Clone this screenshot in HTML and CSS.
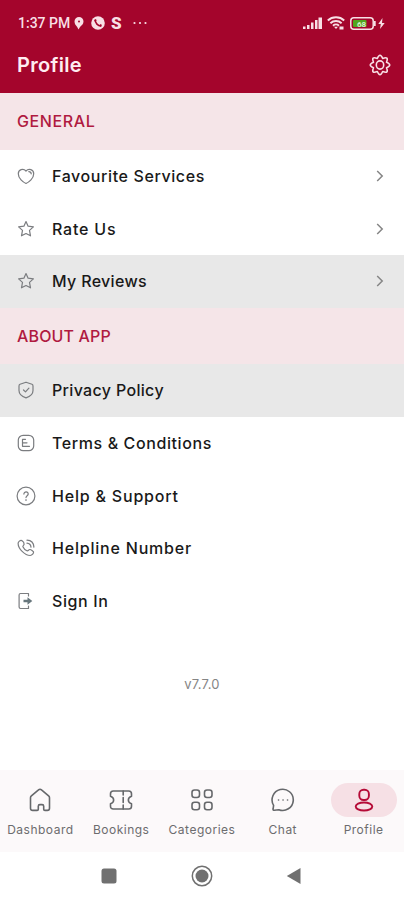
FILE: index.html
```html
<!DOCTYPE html>
<html lang="en">
<head>
<meta charset="utf-8">
<title>Profile</title>
<link rel="stylesheet" href="styles.css">
</head>
<body>
<header class="top">
  <div class="status">
    <span class="time">1:37 PM</span>
    <svg class="pin" width="10" height="13" viewBox="0 0 10 13"><path fill="currentColor" d="M5 0a4.500 4.500 0 0 0-4.500 4.500c0 2.500 1.500 4 2.700 5.500L4.500 12.500 6 10c1.500-1.500 3.500-3 3.500-5.500A4.500 4.500 0 0 0 5 0z"/><circle cx="5" cy="4.500" r="1" fill="#a4052c"/></svg>
    <svg class="call" width="14" height="14" viewBox="0 0 14 14"><circle cx="7" cy="7" r="6.800" fill="currentColor"/><path d="M4.200 4.100c0 3 2.700 5.700 5.700 5.800" fill="none" stroke="#a4052c" stroke-width="1.600" stroke-linecap="round"/><path d="M4 3.800l.9 1.200M8.900 9l1.300.8" stroke="#a4052c" stroke-width="2.200"/></svg>
    <span class="s-mark">S</span>
    <svg class="more" width="14" height="4" viewBox="0 0 14 4"><g fill="currentColor"><circle cx="1.500" cy="2" r="1.100"/><circle cx="7" cy="2" r="1.100"/><circle cx="12.500" cy="2" r="1.100"/></g></svg>
    <svg class="signal" width="19" height="12" viewBox="0 0 19 12"><path fill="currentColor" d="M0 9.500h2.500V12H0zM4 8h2.500v4H4zM8 5.500h2.500V12H8zM12 3h2.500v9H12zM15.500 0.500H19V12h-3.500z"/></svg>
    <svg class="wifi" width="18" height="14" viewBox="0 0 18 14"><g fill="none" stroke="currentColor" stroke-width="1.900"><path d="M.8 4.500c4.500-4.300 11.900-4.300 16.400 0"/><path d="M3.400 7.200c3.100-2.900 8.100-2.900 11.200 0"/><path d="M6 9.700c1.700-1.600 4.300-1.600 6 0"/></g><path fill="currentColor" d="M7 10.800h4L9 13zM12.500 10.500h4V13.500h-4z"/></svg>
    <svg class="battery" width="26" height="13" viewBox="0 0 26 13"><rect x=".8" y=".8" width="22.400" height="11.400" rx="3" fill="none" stroke="currentColor" stroke-width="1.500"/><path d="M24 4h1.700v5H24z" fill="currentColor"/><rect x="3" y="3" width="13.500" height="7" rx="1" fill="#51a51f"/><text x="7" y="9.500" font-family="Roboto, sans-serif" font-size="8" font-weight="700" fill="#d9efcb">68</text></svg>
    <svg class="bolt" width="7" height="11" viewBox="0 0 7 11"><path fill="currentColor" d="M4.500 0L.3 6h2.500L2 11l4.700-6H4z"/></svg>
  </div>
  <div class="title-row">
    <h1>Profile</h1>
    <svg class="gear" width="22" height="22" viewBox="0 0 22 22" fill="none" stroke="currentColor" stroke-width="1.600" stroke-linejoin="round"><path d="M8.300 4.480Q11-1.900 13.700 4.480Q20.120 1.880 17.520 8.300Q23.900 11 17.520 13.700Q20.120 20.120 13.700 17.520Q11 23.900 8.300 17.520Q1.880 20.120 4.480 13.700Q-1.900 11 4.480 8.300Q1.880 1.880 8.300 4.480z"/><ellipse cx="11" cy="11" rx="3.700" ry="4.100"/></svg>
  </div>
</header>
<main>
  <h2>GENERAL</h2>
  <ul>
    <li><svg class="ico" viewBox="0 0 20 20"><path d="M10 17.500C7 16.200 2.300 12.500 2.300 7.700c0-4.200 4.900-5.800 7.700-2.700 2.800-3.100 7.700-1.500 7.700 2.700 0 4.800-4.700 8.500-7.700 9.800z"/><path d="M12.800 5.600c1.500.1 2.300.8 2.400 2.200"/></svg><span>Favourite Services</span><svg class="chev" viewBox="0 0 8 12"><path d="M1.200 1l5 5-5 5"/></svg></li>
    <li><svg class="ico" viewBox="0 0 20 20"><path d="M10 2.600l2.100 4.600 5.300.7-3.900 3.500 1 5.400L10 14.500l-4.500 2.300 1-5.400-3.900-3.500 5.300-.7z"/></svg><span class="wide">Rate Us</span><svg class="chev" viewBox="0 0 8 12"><path d="M1.200 1l5 5-5 5"/></svg></li>
    <li class="pressed"><svg class="ico" viewBox="0 0 20 20"><path d="M10 2.600l2.100 4.600 5.300.7-3.900 3.500 1 5.400L10 14.500l-4.500 2.300 1-5.400-3.900-3.500 5.300-.7z"/></svg><span class="tight">My Reviews</span><svg class="chev" viewBox="0 0 8 12"><path d="M1.200 1l5 5-5 5"/></svg></li>
  </ul>
  <h2 class="tight">ABOUT APP</h2>
  <ul>
    <li class="pressed"><svg class="ico" viewBox="0 0 20 20"><path d="M10 2.200l6 2.100c.8.300 1 .9 1 1.700v4.500c0 3.300-3.200 6.100-7 7.400-3.800-1.300-7-4.100-7-7.400V6c0-.8.200-1.400 1-1.700z"/><path d="M7.500 10l2 1.900 3.400-3.800"/></svg><span class="tight">Privacy Policy</span></li>
    <li><svg class="ico" viewBox="0 0 20 20"><rect x="2.300" y="2.300" width="15.400" height="15.400" rx="4.800"/><path d="M6.500 6.300h3M6.500 9.800h4.500M6.500 13.300h7M6.500 6.300v7"/></svg><span>Terms &amp; Conditions</span></li>
    <li><svg class="ico" viewBox="0 0 20 20"><circle cx="10" cy="10" r="8.900"/><path d="M7.900 8.100c0-3 4.500-2.800 4.300 0-.1 1.600-2.200 1.700-2.200 3.500M10 13.500v1"/></svg><span class="wide">Help &amp; Support</span></li>
    <li><svg class="ico" viewBox="0 0 20 20"><path d="M5.800 2.600c1.300.8 2.400 2.600 2.300 3.600-.1 1-1.700 1.500-1.200 2.600.8 1.800 2.300 3.200 4 4 1.300.6 1.700-1.400 3-1.300 1.200.1 3.300 1.500 3.600 2.300.5 1.500-1.500 3.700-3.300 3.700C8.800 17.500 2.200 10.700 2.100 5.500c0-1.700 2.200-3.700 3.700-2.900z"/><path d="M11 2.200c4 .2 6.700 3 6.900 6.900M11 5.200c2.400.2 3.700 1.500 4 3.900"/></svg><span class="wide">Helpline Number</span></li>
    <li><svg class="ico signin" viewBox="0 0 20 20"><path d="M12.500 5V2.500h-8c-1 0-1.400.5-1.400 1.400v12.200c0 .9.400 1.400 1.400 1.400h8V15"/><path class="arrow" d="M7.500 8.800h4V6.200L16.300 10l-4.800 3.800v-2.600h-4z"/></svg><span>Sign In</span></li>
  </ul>
  <p class="version">v7.7.0</p>
</main>
<nav class="tabs">
  <a><i><svg viewBox="0 0 26 26"><path d="M3.500 10.800c0-.8.300-1.400.9-1.900l7.100-6c.9-.8 2.100-.8 3 0l7.100 6c.6.500.9 1.100.9 1.900v10.400c0 1.400-.8 2.200-2.200 2.200h-2.400c-.8 0-1.200-.4-1.200-1.200v-3c0-1-.6-1.600-1.600-1.600h-2.200c-1 0-1.600.6-1.600 1.600v3c0 .8-.4 1.200-1.200 1.200H5.700c-1.400 0-2.200-.8-2.200-2.200z"/></svg></i><span>Dashboard</span></a>
  <a><i><svg viewBox="0 0 26 26"><path d="M2.500 6.800c0-1.800 1-2.800 2.800-2.800h15.400c1.800 0 2.800 1 2.800 2.800v2.400c-4.200 1.300-4.200 6.300 0 7.600v2.400c0 1.800-1 2.800-2.800 2.800H5.300c-1.800 0-2.800-1-2.800-2.800v-2.400c4.200-1.300 4.200-6.300 0-7.600z"/><path d="M15.200 4v4M15.200 10.500v5M15.200 18v4"/></svg></i><span>Bookings</span></a>
  <a><i><svg viewBox="0 0 26 26"><rect x="3" y="3" width="7.500" height="7.500" rx="2.500"/><rect x="15.500" y="3" width="7.500" height="7.500" rx="2.500"/><rect x="3" y="15.200" width="7.500" height="7.500" rx="2.500"/><rect x="15.500" y="15.200" width="7.500" height="7.500" rx="2.500"/></svg></i><span>Categories</span></a>
  <a><i><svg viewBox="0 0 26 26"><path d="M3.600 18.300A10.600 10.600 0 1 1 8.800 22.700l-4.500.6c-.9.100-1.400-.4-1.200-1.300z"/><path class="dots" d="M8.500 13h.1M13 13h.1M17.500 13h.1"/></svg></i><span>Chat</span></a>
  <a class="on"><i><svg viewBox="0 0 26 26"><rect x="8.300" y="2.700" width="9.600" height="10.300" rx="4.200"/><ellipse cx="13" cy="19.500" rx="8.300" ry="4"/></svg></i><span>Profile</span></a>
</nav>
<footer class="system">
  <svg width="16" height="16"><rect x=".5" y=".5" width="15" height="15" rx="2.500" fill="#707070"/></svg>
  <svg width="22" height="22"><circle cx="11" cy="11" r="9.700" fill="none" stroke="#707070" stroke-width="1.500"/><circle cx="11" cy="11" r="6.500" fill="#707070"/></svg>
  <svg width="16" height="18"><path d="M.8 9L14.500 1v16z" fill="#707070"/></svg>
</footer>
</body>
</html>
```
FILE: styles.css
```css
* { box-sizing: border-box; }
body { margin: 0; width: 404px; height: 900px; display: flex; flex-direction: column; background: #fff; color: #191919; font-family: Inter, "Noto Sans", sans-serif; overflow: hidden; }
svg { display: block; flex: none; }
h1, h2, ul, p { margin: 0; padding: 0; }
.top { height: 93px; background: #a4052c; color: #f8dfe5; }
.status { height: 46px; padding: 0 19px 0 18px; display: flex; align-items: center; }
.time { width: 52px; font: 500 14px Roboto, sans-serif; white-space: nowrap; }
.pin { margin-left: 4px; }
.call { margin-left: 7px; }
.s-mark { margin-left: 6px; width: 11px; font: 900 17px Roboto, sans-serif; }
.more { margin-left: 11px; }
.signal { margin-left: auto; }
.wifi { margin-left: 5px; }
.battery { margin-left: 5px; }
.bolt { margin-left: 2px; }
.title-row { height: 38px; padding: 0 13px 0 17px; display: flex; align-items: center; justify-content: space-between; }
h1 { font-size: 20px; line-height: 24px; font-weight: 600; letter-spacing: .3px; color: #ffedf1; }
h2 { height: 56.500px; padding-left: 17px; display: flex; align-items: center; background: #f5e5e8; color: #b01a40; font-size: 16px; font-weight: 500; letter-spacing: .6px; }
h2.tight { letter-spacing: .15px; }
ul { list-style: none; }
li { height: 52.700px; padding: 0 20px 0 16px; display: flex; align-items: center; }
li.pressed { background: #e8e8e8; }
li span { margin-left: 16px; font-size: 16px; font-weight: 500; letter-spacing: .6px; white-space: nowrap; }
li .tight { letter-spacing: .33px; }
li .wide { letter-spacing: .8px; }
.ico { width: 20px; height: 20px; fill: none; stroke: #7b7d80; stroke-width: 1.200; stroke-linecap: round; stroke-linejoin: round; }
.signin .arrow { fill: #68777d; stroke: none; }
.chev { width: 8px; height: 12px; margin-left: auto; fill: none; stroke: #858585; stroke-width: 1.500; }
.version { margin-top: 47px; text-align: center; font-size: 13px; line-height: 18px; letter-spacing: .3px; color: #858585; }
.tabs { margin-top: auto; height: 82px; padding-top: 13px; display: grid; grid-template-columns: repeat(5, 1fr); background: #fcf9fa; }
.tabs a { display: flex; flex-direction: column; align-items: center; color: #66686b; }
.tabs i { width: 66px; height: 34px; border-radius: 17px; display: flex; align-items: center; justify-content: center; }
.tabs svg { width: 26px; height: 26px; fill: none; stroke: currentColor; stroke-width: 1.600; stroke-linecap: round; stroke-linejoin: round; }
.tabs span { margin-top: 5px; font-size: 12px; line-height: 16px; letter-spacing: .5px; color: #6c6c6e; }
.tabs .on i { background: #f6e0e5; color: #b50b37; }
.tabs .on svg { stroke-width: 1.900; }
.system { height: 48px; padding: 0 102px 0 101px; display: flex; align-items: center; justify-content: space-between; }
```
